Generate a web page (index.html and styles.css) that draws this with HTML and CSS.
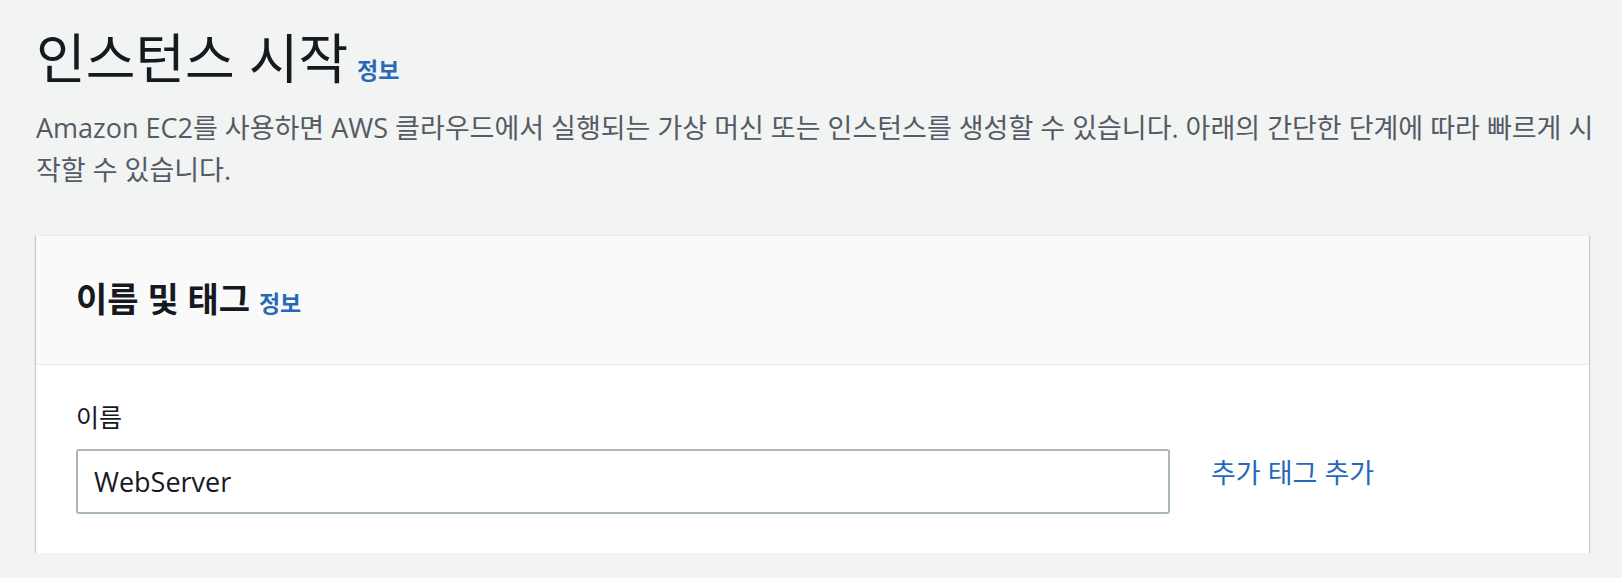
FILE: index.html
```html
<!DOCTYPE html>
<html lang="ko">
<head>
<meta charset="utf-8">
<title>인스턴스 시작</title>
<link rel="stylesheet" href="styles.css">
</head>
<body>
<main class="page">
  <header class="page-head">
    <h1 class="page-title">인스턴스 시작<a class="info-link info-title" href="#">정보</a></h1>
    <p class="page-desc">Amazon EC2를 사용하면 AWS 클라우드에서 실행되는 가상 머신 또는 인스턴스를 생성할 수 있습니다. 아래의 간단한 단계에 따라 빠르게 시작할 수 있습니다.</p>
  </header>
  <section class="card">
    <div class="card-head">
      <h2 class="card-title">이름 및 태그 <a class="info-link info-card" href="#">정보</a></h2>
    </div>
    <div class="card-body">
      <label class="field-label" for="name">이름</label>
      <div class="field-row">
        <input class="text-input" id="name" type="text" value="WebServer">
        <a class="add-link" href="#">추가 태그 추가</a>
      </div>
    </div>
  </section>
</main>
</body>
</html>
```
FILE: styles.css
```css
html, body {
  margin: 0;
  padding: 0;
}
body {
  background: #f2f3f3;
  font-family: "Open Sans", "Noto Sans CJK KR", sans-serif;
  color: #16191f;
}
.page {
  padding: 20px 33px 0 36px;
}
.page-head {
  margin: 0;
}
.page-title {
  margin: 0;
  font-family: "Open Sans", "Noto Sans CJK KR", sans-serif;
  font-size: 54px;
  font-weight: 400;
  line-height: 76px;
  color: #16191f;
}
.info-link {
  color: #266ab7;
  text-decoration: none;
  font-weight: 700;
  font-family: "Noto Sans CJK KR", sans-serif;
}
.info-title {
  font-size: 23px;
  margin-left: 9px;
}
.page-desc {
  margin: 0 -12px 0 0;
  font-size: 27px;
  line-height: 42px;
  color: #545b64;
}
.card {
  margin-top: 44px;
  background: #fff;
  border-top: 1px solid #eaeded;
  box-shadow: 0 1px 1px 0 rgba(0, 28, 36, 0.3), 1px 1px 1px 0 rgba(0, 28, 36, 0.15), -1px 1px 1px 0 rgba(0, 28, 36, 0.15);
}
.card-head {
  background: #fafafa;
  border-bottom: 1px solid #eaeded;
  height: 128px;
  display: flex;
  align-items: center;
  padding: 0 40px;
}
.card-title {
  margin: 0;
  font-family: "Open Sans", "Noto Sans CJK KR", sans-serif;
  font-size: 34px;
  font-weight: 700;
  line-height: 44px;
}
.info-card {
  font-size: 23px;
}
.card-body {
  padding: 32px 40px 39px;
}
.field-label {
  display: block;
  font-family: "Noto Sans CJK KR", sans-serif;
  font-size: 25px;
  line-height: 38px;
  color: #16191f;
}
.field-row {
  margin-top: 14px;
  display: flex;
  align-items: flex-start;
  gap: 41px;
}
.text-input {
  box-sizing: border-box;
  width: 1094px;
  height: 65px;
  margin: 0;
  padding: 0 16px;
  border: 2px solid #aab7b8;
  border-radius: 3px;
  background: #fff;
  font-family: "Open Sans", "Noto Sans CJK KR", sans-serif;
  font-size: 27px;
  color: #16191f;
  outline: none;
}
.add-link {
  margin-top: 4px;
  font-family: "Open Sans", "Noto Sans CJK KR", sans-serif;
  font-size: 27px;
  line-height: 40px;
  color: #266ab7;
  text-decoration: none;
}
```
